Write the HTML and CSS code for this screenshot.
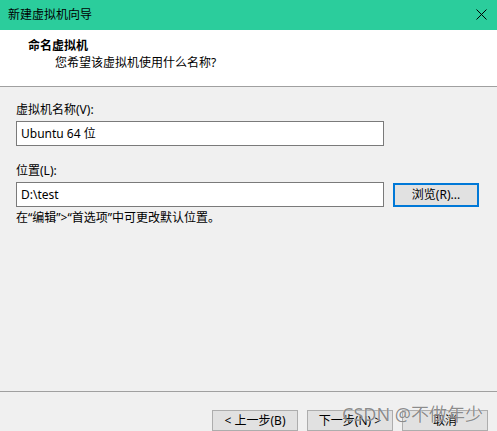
FILE: index.html
```html
<!DOCTYPE html>
<html lang="zh-CN">
<head>
<meta charset="utf-8">
<title>新建虚拟机向导</title>
<link rel="stylesheet" href="styles.css">
</head>
<body>
<div class="window">
  <div class="titlebar">
    <span class="title">新建虚拟机向导</span>
    <svg class="close" width="11" height="11" viewBox="0 0 11 11"><path d="M0.5 0.5 L10.5 10.5 M10.5 0.5 L0.5 10.5" stroke="#000" stroke-width="1" fill="none"/></svg>
  </div>
  <div class="header">
    <div class="h-title">命名虚拟机</div>
    <div class="h-sub">您希望该虚拟机使用什么名称?</div>
  </div>
  <div class="content">
    <div class="label">虚拟机名称(V):</div>
    <div class="row">
      <div class="input">Ubuntu 64 位</div>
    </div>
    <div class="label second">位置(L):</div>
    <div class="row">
      <div class="input">D:\test</div>
      <div class="btn browse">浏览(R)...</div>
    </div>
    <div class="hint">在“编辑”&gt;“首选项”中可更改默认位置。</div>
  </div>
  <div class="footer">
    <div class="btn">&lt; 上一步(B)</div>
    <div class="btn">下一步(N) &gt;</div>
    <div class="btn">取消</div>
  </div>
  <div class="watermark">CSDN @不做年少</div>
</div>
</body>
</html>
```
FILE: styles.css
```css
* { box-sizing: border-box; }
html, body { margin: 0; padding: 0; }
body {
  background: #f0f0f0;
  font-family: "Noto Sans", "Noto Sans CJK SC", sans-serif;
  font-size: 12px;
  color: #000;
}
.window {
  position: relative;
  width: 497px;
  height: 431px;
  overflow: hidden;
  display: flex;
  flex-direction: column;
}
.titlebar {
  height: 30px;
  background: #2bcd9c;
  display: flex;
  align-items: center;
  justify-content: space-between;
  padding: 0 10px 0 8px;
}
.title { font-size: 12px; line-height: 16px; }
.close { display: block; margin-top: -1px; }
.header {
  height: 57px;
  background: #fff;
  border-bottom: 1px solid #a0a0a0;
  padding: 8px 0 0 28px;
}
.h-title { font-weight: bold; line-height: 16px; }
.h-sub { line-height: 16px; padding-left: 27px; margin-top: 1px; }
.content {
  flex: 1;
  padding: 15px 0 0 16px;
}
.label { line-height: 16px; }
.label.second { margin-top: 17px; }
.row {
  display: flex;
  align-items: center;
  gap: 9px;
  margin-top: 3px;
}
.input {
  width: 368px;
  height: 25px;
  background: #fff;
  border: 1px solid #7a7a7a;
  padding-left: 4px;
  line-height: 23px;
}
.btn {
  width: 86px;
  height: 21px;
  background: #e1e1e1;
  border: 1px solid #adadad;
  text-align: center;
  line-height: 19px;
}
.btn.browse {
  height: 24px;
  border: 2px solid #0078d7;
  line-height: 20px;
  margin-top: 1px;
}
.hint { margin-top: 3px; line-height: 16px; }
.footer {
  height: 40px;
  border-top: 1px solid #a0a0a0;
  display: flex;
  justify-content: flex-end;
  gap: 9px;
  padding: 18px 9px 0 0;
}
.watermark {
  position: absolute;
  left: 342px;
  top: 403px;
  font-size: 18px;
  line-height: 22px;
  color: rgba(90, 90, 90, 0.7);
  text-shadow: 0 0 1px #fff;
  white-space: nowrap;
}
```
